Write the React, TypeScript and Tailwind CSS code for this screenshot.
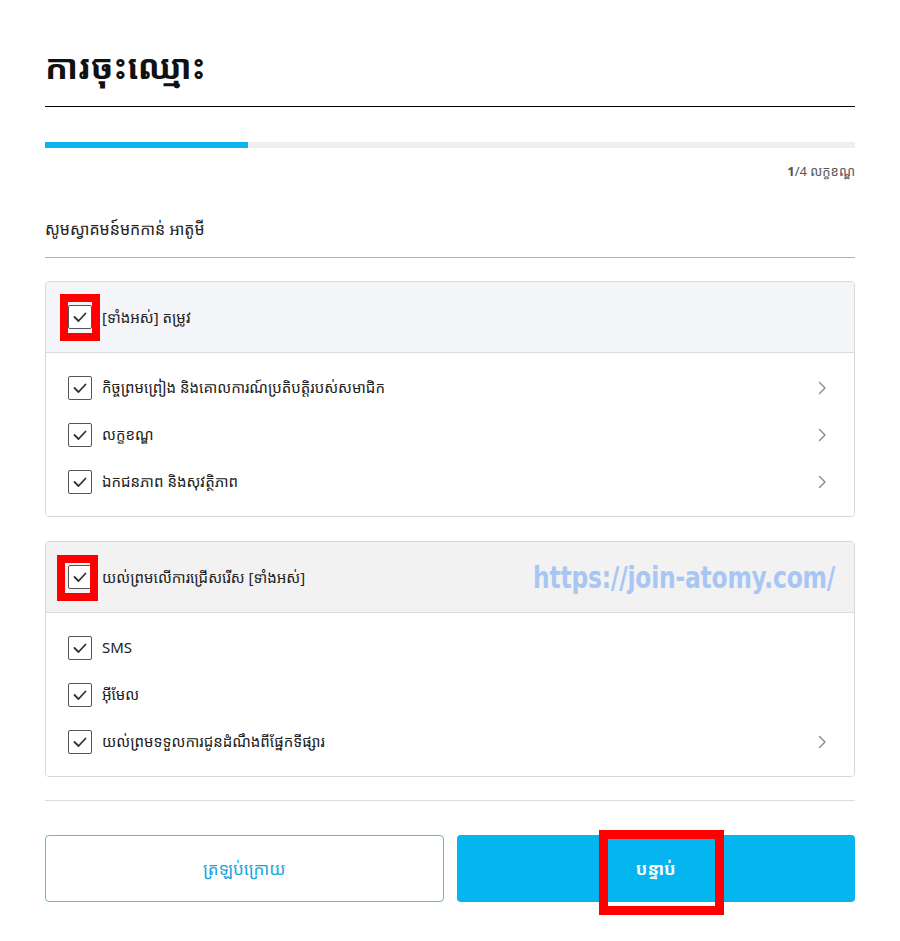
import React from "react";

const FONT = { fontFamily: '"Noto Sans", "Noto Sans Khmer", "Khmer OS", "Liberation Sans", sans-serif' };

function Check() {
  return (
    <div className="w-[24px] h-[24px] shrink-0 border border-[#555] rounded-[2px] bg-white flex items-center justify-center">
      <svg width="16" height="16" viewBox="0 0 16 16" fill="none">
        <path d="M2.5 8 L6.5 12 L13.5 4.5" stroke="#333" strokeWidth="1.8" strokeLinecap="round" strokeLinejoin="round" />
      </svg>
    </div>
  );
}

function Chevron() {
  return (
    <svg width="9" height="14" viewBox="0 0 9 14" fill="none">
      <path d="M1.5 1.5 L7 7 L1.5 12.5" stroke="#888" strokeWidth="1.4" strokeLinecap="round" strokeLinejoin="round" />
    </svg>
  );
}

function Row({ label, arrow }: { label: string; arrow?: boolean }) {
  return (
    <div className="h-[47px] flex items-center pl-[22px] pr-[27px]">
      <Check />
      <span className="ml-[10px] text-[15px] text-[#222] flex-1">{label}</span>
      {arrow && <Chevron />}
    </div>
  );
}

function Card({
  header,
  headerBg,
  rows,
  highlight,
  watermark,
}: {
  header: string;
  headerBg: string;
  rows: { label: string; arrow?: boolean }[];
  highlight: string;
  watermark?: boolean;
}) {
  return (
    <div className="border border-[#d8d8d8] rounded-[4px] overflow-hidden">
      <div className={`relative h-[71px] flex items-center pl-[22px] border-b border-[#dcdcdc] ${headerBg}`}>
        <div className="relative">
          <Check />
          <div className={`absolute border-[8px] border-[#ff0000] ${highlight}`} />
        </div>
        <span className="ml-[10px] text-[15px] text-[#222]">{header}</span>
        {watermark && (
          <span
            className="absolute left-[487px] top-[21px] whitespace-nowrap text-[26px] font-bold font-stretch-condensed text-[#a8c6f4] leading-[30px] tracking-[-0.2px] origin-left scale-y-[1.15]"
            style={{ fontFamily: '"DejaVu Sans", sans-serif' }}
          >
            https://join-atomy.com/
          </span>
        )}
      </div>
      <div className="py-[11px] bg-white">
        {rows.map((r, i) => (
          <Row key={i} label={r.label} arrow={r.arrow} />
        ))}
      </div>
    </div>
  );
}

export default function App() {
  return (
    <div className="w-[900px] h-[941px] bg-white px-[45px]" style={FONT}>
      <div className="h-[107px] pt-[40px] border-b border-black">
        <h1 className="text-[34px] font-bold leading-[52px] text-[#111]">ការចុះឈ្មោះ</h1>
      </div>
      <div className="mt-[35px] h-[6px] bg-[#eeeeee]">
        <div className="h-full w-1/4 bg-[#0ab4ec]" />
      </div>
      <div className="mt-[14px] h-[18px] leading-[18px] text-right text-[13px] text-[#555]">
        <span className="font-bold">1</span>/4 លក្ខខណ្ឌ
      </div>
      <div className="mt-[37px] pb-[16px] border-b border-[#b0b0b0] text-[16px] leading-[24px] text-[#222]">
        សូមស្វាគមន៍មកកាន់ អាតូមី
      </div>
      <div className="mt-[23px]">
        <Card
          header="[ទាំងអស់] តម្រូវ"
          headerBg="bg-[#f4f5f8]"
          highlight="-left-[8px] -top-[11px] w-[40px] h-[47px]"
          rows={[
            { label: "កិច្ចព្រមព្រៀង និងគោលការណ៍ប្រតិបត្តិរបស់សមាជិក", arrow: true },
            { label: "លក្ខខណ្ឌ", arrow: true },
            { label: "ឯកជនភាព និងសុវត្ថិភាព", arrow: true },
          ]}
        />
      </div>
      <div className="mt-[24px]">
        <Card
          header="យល់ព្រមលើការជ្រើសរើស [ទាំងអស់]"
          headerBg="bg-[#f2f2f2]"
          highlight="-left-[11px] -top-[10px] w-[41px] h-[46px]"
          watermark
          rows={[
            { label: "SMS" },
            { label: "អ៊ីមែល" },
            { label: "យល់ព្រមទទួលការជូនដំណឹងពីផ្នែកទីផ្សារ", arrow: true },
          ]}
        />
      </div>
      <div className="mt-[23px] border-t border-[#dddddd]" />
      <div className="mt-[34px] grid grid-cols-2 gap-[13px]">
        <button className="h-[67px] rounded-[4px] border border-[#4fbde8] bg-white text-[#1aa6dc] text-[17px]">
          ត្រឡប់ក្រោយ
        </button>
        <button className="relative h-[67px] rounded-[4px] bg-[#05b5ef] text-white text-[17px] font-bold">
          បន្ទាប់
          <div className="absolute left-[142px] -top-[5px] w-[125px] h-[85px] border-[9px] border-[#ff0000]" />
        </button>
      </div>
    </div>
  );
}
